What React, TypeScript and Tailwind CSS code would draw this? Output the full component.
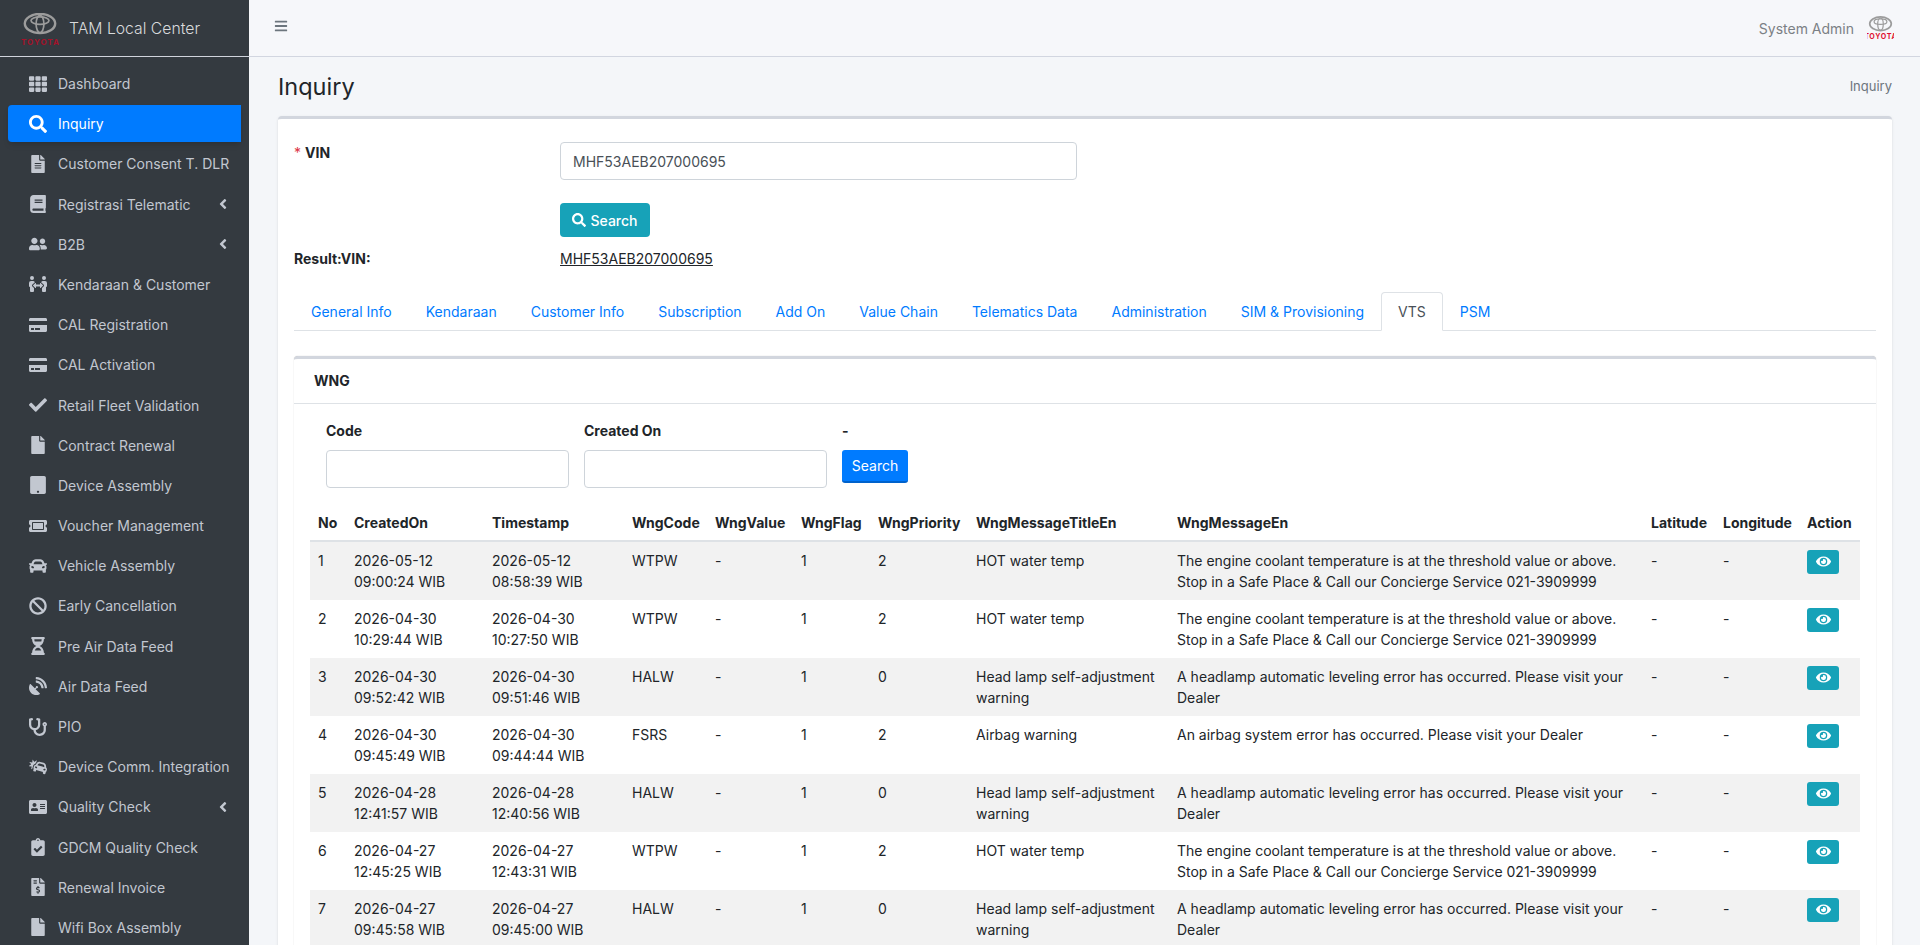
import React from "react";
import { FaTh, FaSearch, FaFileAlt, FaBook, FaUserFriends, FaPeopleArrows, FaCreditCard, FaCheck, FaFile, FaTablet, FaTicketAlt, FaCar, FaBan, FaHourglassHalf, FaSatelliteDish, FaStethoscope, FaCarCrash, FaAddressCard, FaClipboardCheck, FaFileInvoiceDollar, FaEye, FaBars, FaAngleLeft } from "react-icons/fa";

const menu: [string, React.ComponentType<{ className?: string }>, boolean?][] = [
  ["Dashboard", FaTh], ["Inquiry", FaSearch], ["Customer Consent T. DLR", FaFileAlt], ["Registrasi Telematic", FaBook, true], ["B2B", FaUserFriends, true], ["Kendaraan & Customer", FaPeopleArrows], ["CAL Registration", FaCreditCard], ["CAL Activation", FaCreditCard], ["Retail Fleet Validation", FaCheck], ["Contract Renewal", FaFile], ["Device Assembly", FaTablet], ["Voucher Management", FaTicketAlt], ["Vehicle Assembly", FaCar], ["Early Cancellation", FaBan], ["Pre Air Data Feed", FaHourglassHalf], ["Air Data Feed", FaSatelliteDish], ["PIO", FaStethoscope], ["Device Comm. Integration", FaCarCrash], ["Quality Check", FaAddressCard, true], ["GDCM Quality Check", FaClipboardCheck], ["Renewal Invoice", FaFileInvoiceDollar], ["Wifi Box Assembly", FaFile],
];

const tabs = ["General Info", "Kendaraan", "Customer Info", "Subscription", "Add On", "Value Chain", "Telematics Data", "Administration", "SIM & Provisioning", "VTS", "PSM"];

const hot = ["HOT water temp", "The engine coolant temperature is at the threshold value or above. Stop in a Safe Place & Call our Concierge Service 021-3909999"];
const lamp = ["Head lamp self-adjustment warning", "A headlamp automatic leveling error has occurred. Please visit your Dealer"];
const air = ["Airbag warning", "An airbag system error has occurred. Please visit your Dealer"];

const rows: [string, string, string, string, string, string, string, string[]][] = [
  ["1", "2026-05-12", "09:00:24 WIB", "2026-05-12", "08:58:39 WIB", "WTPW", "2", hot],
  ["2", "2026-04-30", "10:29:44 WIB", "2026-04-30", "10:27:50 WIB", "WTPW", "2", hot],
  ["3", "2026-04-30", "09:52:42 WIB", "2026-04-30", "09:51:46 WIB", "HALW", "0", lamp],
  ["4", "2026-04-30", "09:45:49 WIB", "2026-04-30", "09:44:44 WIB", "FSRS", "2", air],
  ["5", "2026-04-28", "12:41:57 WIB", "2026-04-28", "12:40:56 WIB", "HALW", "0", lamp],
  ["6", "2026-04-27", "12:45:25 WIB", "2026-04-27", "12:43:31 WIB", "WTPW", "2", hot],
  ["7", "2026-04-27", "09:45:58 WIB", "2026-04-27", "09:45:00 WIB", "HALW", "0", lamp],
];

const heads: [string, string][] = [
  ["No", "w-[36px]"], ["CreatedOn", "w-[138px]"], ["Timestamp", "w-[140px]"], ["WngCode", "w-[83px]"], ["WngValue", "w-[86px]"], ["WngFlag", "w-[77px]"], ["WngPriority", "w-[98px]"], ["WngMessageTitleEn", "w-[201px]"], ["WngMessageEn", "w-[474px]"], ["Latitude", "w-[72px]"], ["Longitude", "w-[84px]"], ["Action", "w-[61px]"],
];

function Logo({ w, h, color, clip }: { w: number; h: number; color: string; clip?: boolean }) {
  return (
    <svg width={w} height={h} viewBox="0 0 38 33" className="shrink-0">
      <g fill="none" stroke="#9c9c9c">
        <ellipse cx="19" cy="10.5" rx="15.2" ry="9.6" strokeWidth="2.4" />
        <ellipse cx="19" cy="7.6" rx="9" ry="3.8" strokeWidth="1.7" />
        <ellipse cx="19" cy="11" rx="3.9" ry="8.6" strokeWidth="1.7" />
      </g>
      <text x="19" y="31.5" textAnchor="middle" fontSize={clip ? 10 : 8} fontWeight="700" fill={color} fontFamily="Inter, sans-serif" textLength={clip ? 46 : 38}>TOYOTA</text>
    </svg>
  );
}

export default function App() {
  return (
    <div className="flex h-[945px] w-[1920px] overflow-hidden bg-[#f4f6f9] text-[14px] leading-[21px] text-[#212529] [font-family:Inter,sans-serif]">
      <aside className="h-full w-[249px] shrink-0 overflow-hidden bg-[#343a40] text-[#c2c7d0]">
        <div className="flex h-[57px] items-center border-b border-[#d0d4dc] pl-[21px]">
          <div className="mt-[2px]"><Logo w={38} h={33} color="#a3122a" /></div>
          <span className="ml-[10px] mt-[1px] text-[15.75px] font-light leading-[24px] text-[#d9dadc]">TAM Local Center</span>
        </div>
        <nav className="px-2 pt-[8px]">
          {menu.map(([label, Icon, chev]) => {
            const active = label === "Inquiry";
            return (
              <div key={label} className={`mb-[3.2px] flex h-[37px] items-center rounded-l-[4px] pl-[17px] pr-[10px] ${active ? "bg-[#007bff] text-white shadow-md" : ""}`}>
                <span className="flex w-[26px] shrink-0 justify-center"><Icon className="h-[18px] w-auto" /></span>
                <span className="ml-[7px] flex-1 whitespace-nowrap">{label}</span>
                {chev && <FaAngleLeft className="h-[16px] w-auto" />}
              </div>
            );
          })}
        </nav>
      </aside>

      <main className="min-w-0 flex-1">
        <header className="flex h-[57px] items-center justify-between border-b border-[#d2d6e0] bg-[#f6f7fa] pl-[25px] pr-[26px]">
          <FaBars className="-mt-[5px] h-[14px] w-auto text-[#6c757d]" />
          <div className="flex items-center text-[#7b8085]">
            <span className="mt-[1px] text-[14px]">System Admin</span>
            <div className="ml-[13px] h-[26px] w-[27px] overflow-hidden"><Logo w={27} h={26} color="#e0102f" clip /></div>
          </div>
        </header>

        <div className="flex h-[59px] items-center justify-between pl-[29px] pr-[28px]">
          <h1 className="-mt-[1px] text-[23.5px] font-normal leading-[29px] text-[#212529]">Inquiry</h1>
          <span className="text-[13px] text-[#6c757d]">Inquiry</span>
        </div>

        <div className="ml-[29px] mr-[28px] h-[900px] rounded-[4px] border-t-[3px] border-[#d2d6de] bg-white px-4 pt-[23px] shadow-sm">
          <div className="flex">
            <label className="w-[266px] font-bold"><span className="mr-[4px] font-normal text-[#dc3545]">*</span>VIN</label>
            <div>
              <div className="flex h-[38px] w-[517px] items-center rounded-[4px] border border-[#ced4da] bg-white px-3 text-[#495057]">MHF53AEB207000695</div>
              <button className="mt-[23px] flex h-[34px] w-[90px] items-center justify-center rounded-[4px] bg-[#17a2b8] font-medium text-white"><FaSearch className="mr-[4px] h-[14px] w-auto" />Search</button>
            </div>
          </div>
          <div className="mt-[11px] flex">
            <span className="w-[266px] font-bold">Result:VIN:</span>
            <a className="underline">MHF53AEB207000695</a>
          </div>

          <div className="mt-[23px] flex h-[39px] border-b border-[#dee2e6] text-[#007bff]">
            {tabs.map((t) => (
              <div key={t} className={`h-[39px] whitespace-nowrap rounded-t-[4px] border px-4 pt-[8px] ${t === "VTS" ? "border-[#dee2e6] border-b-white bg-white text-[#495057]" : "border-transparent"}`}>{t}</div>
            ))}
          </div>

          <section className="mt-[25px] rounded-[4px] border-t-[3px] border-[#d2d6de] bg-white shadow-[0_0_1px_rgba(0,0,0,0.3)]">
            <div className="flex h-[45px] items-center border-b border-[#dee2e6] px-5 pb-[2px] font-bold">WNG</div>
            <div className="px-4 pt-[16px]">
              <div className="flex pl-4">
                <div className="w-[243px]">
                  <div className="mb-[8.5px] font-bold">Code</div>
                  <div className="h-[38px] rounded-[4px] border border-[#ced4da]" />
                </div>
                <div className="ml-[15px] w-[243px]">
                  <div className="mb-[8.5px] font-bold">Created On</div>
                  <div className="h-[38px] rounded-[4px] border border-[#ced4da]" />
                </div>
                <div className="ml-[15px]">
                  <div className="mb-[8.5px] font-bold">-</div>
                  <button className="flex h-[33px] w-[66px] items-center justify-center rounded-[3px] border-b-2 border-[#0062cc] bg-[#007bff] text-white">Search</button>
                </div>
              </div>

              <table className="mt-4 w-[1550px] table-fixed border-collapse">
                <thead>
                  <tr>
                    {heads.map(([h, w]) => (
                      <th key={h} className={`${w} overflow-visible whitespace-nowrap border-b-2 border-[#dee2e6] px-2 pb-[7px] pt-2 text-left font-bold`}>{h}</th>
                    ))}
                  </tr>
                </thead>
                <tbody>
                  {rows.map((r, i) => (
                    <tr key={r[0]} className={i % 2 === 0 ? "bg-[#f2f2f2]" : "bg-white"}>
                      <td className="p-2 align-top">{r[0]}</td>
                      <td className="p-2 align-top">{r[1]}<br />{r[2]}</td>
                      <td className="p-2 align-top">{r[3]}<br />{r[4]}</td>
                      <td className="p-2 align-top">{r[5]}</td>
                      <td className="p-2 align-top">-</td>
                      <td className="p-2 align-top">1</td>
                      <td className="p-2 align-top">{r[6]}</td>
                      <td className="p-2 align-top">{r[7][0]}</td>
                      <td className="p-2 align-top">{r[7][1]}</td>
                      <td className="p-2 align-top">-</td>
                      <td className="p-2 align-top">-</td>
                      <td className="p-2 align-top">
                        <button className="flex h-[24px] w-[32px] items-center justify-center rounded-[3px] bg-[#17a2b8] text-white"><FaEye className="h-[15px] w-auto" /></button>
                      </td>
                    </tr>
                  ))}
                </tbody>
              </table>
            </div>
          </section>
        </div>
      </main>
    </div>
  );
}
